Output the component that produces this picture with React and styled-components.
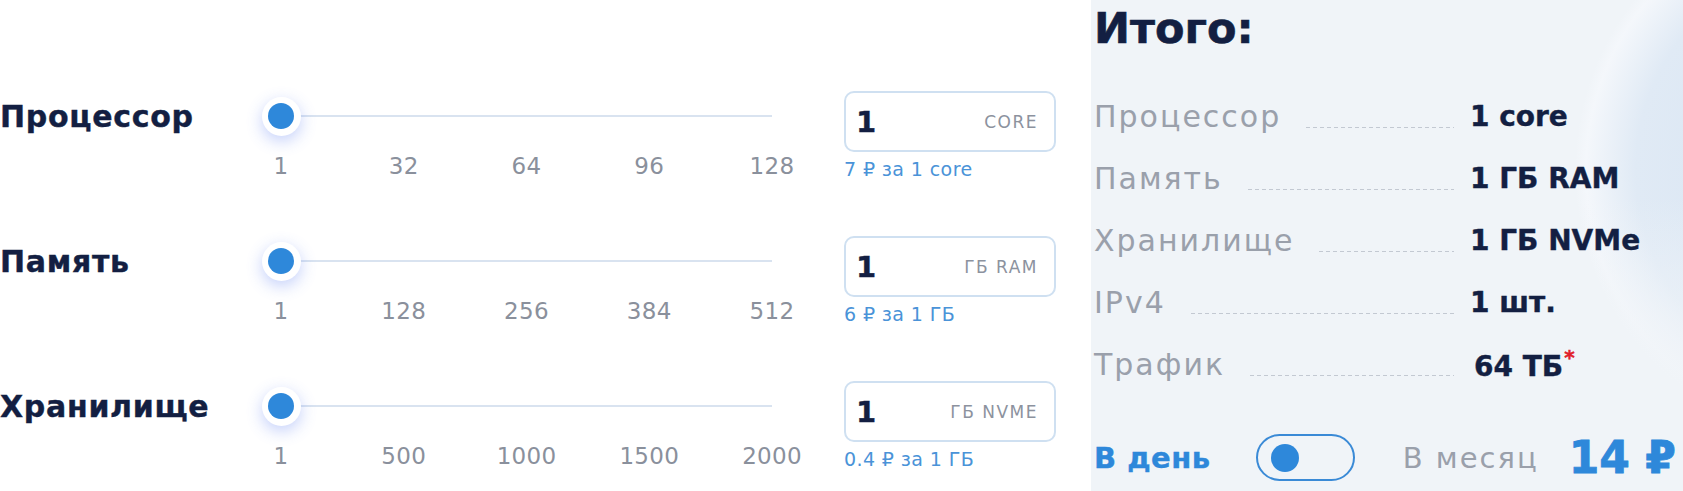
import React from 'react'
import styled, { createGlobalStyle } from 'styled-components'

const GlobalStyle = createGlobalStyle`
  html, body {
    margin: 0;
    padding: 0;
    background: #fff;
  }
  body {
    font-family: "DejaVu Sans", Inter, Arial, sans-serif;
    color: #131f42;
  }
`

const sliders = [
  { label: 'Процессор', ticks: ['1', '32', '64', '96', '128'], unit: 'CORE', price: '7 ₽ за 1 core' },
  { label: 'Память', ticks: ['1', '128', '256', '384', '512'], unit: 'ГБ RAM', price: '6 ₽ за 1 ГБ' },
  { label: 'Хранилище', ticks: ['1', '500', '1000', '1500', '2000'], unit: 'ГБ NVME', price: '0.4 ₽ за 1 ГБ' },
]

const summary = [
  { label: 'Процессор', value: '1 core' },
  { label: 'Память', value: '1 ГБ RAM' },
  { label: 'Хранилище', value: '1 ГБ NVMe' },
  { label: 'IPv4', value: '1 шт.' },
  { label: 'Трафик', value: '64 ТБ', note: true },
]

const App = () => {
  return (
    <>
      <GlobalStyle />
      <Page>
        <Config>
          {sliders.map((s) => (
            <SliderRow key={s.label}>
              <RowLabel>{s.label}</RowLabel>
              <Track>
                <Line />
                <Thumb />
              </Track>
              <ValueBox>
                <Amount>1</Amount>
                <Unit>{s.unit}</Unit>
              </ValueBox>
              <span />
              <Ticks>
                {s.ticks.map((t) => (
                  <Tick key={t}>{t}</Tick>
                ))}
              </Ticks>
              <Price>{s.price}</Price>
            </SliderRow>
          ))}
        </Config>

        <Total>
          <Title>Итого:</Title>
          <SummaryList>
            {summary.map((r) => (
              <SummaryRow key={r.label}>
                <SummaryLabel>
                  <span>{r.label}</span>
                  <Leader />
                </SummaryLabel>
                <SummaryValue $note={r.note}>
                  {r.value}
                  {r.note && <Star>*</Star>}
                </SummaryValue>
              </SummaryRow>
            ))}
          </SummaryList>
          <Period>
            <PeriodOption $active>В день</PeriodOption>
            <Toggle>
              <Knob />
            </Toggle>
            <PeriodOption>В месяц</PeriodOption>
            <Sum>14 ₽</Sum>
          </Period>
        </Total>
      </Page>
    </>
  )
}

const Page = styled.div`
  display: flex;
  width: 1683px;
  height: 491px;
  overflow: hidden;
`

const Config = styled.div`
  width: 1091px;
  flex-shrink: 0;
  padding-top: 91px;
  display: flex;
  flex-direction: column;
  gap: 52px;
  box-sizing: border-box;
`

const SliderRow = styled.div`
  display: grid;
  grid-template-columns: 281px 563px 212px;
  grid-template-rows: 61px 32px;
  align-items: center;
`

const RowLabel = styled.div`
  font-size: 30px;
  font-weight: 700;
  color: #131f42;
  letter-spacing: 0.7px;
  padding-bottom: 11px;
  -webkit-text-stroke: 0.4px #131f42;
`

const Track = styled.div`
  position: relative;
  width: 491px;
  height: 39px;
  margin-bottom: 11px;
  display: flex;
  align-items: center;
`

const Line = styled.div`
  width: 100%;
  height: 2px;
  background: #d9e3f0;
`

const Thumb = styled.div`
  position: absolute;
  left: -19.5px;
  top: 0;
  width: 39px;
  height: 39px;
  border-radius: 50%;
  background: #fff;
  box-shadow: 0 5px 16px rgba(70, 110, 240, 0.32);
  display: flex;
  align-items: center;
  justify-content: center;
  &::after {
    content: '';
    width: 26px;
    height: 26px;
    border-radius: 50%;
    background: #2e88da;
  }
`

const ValueBox = styled.div`
  height: 61px;
  box-sizing: border-box;
  border: 2px solid #cfe0f1;
  border-radius: 10px;
  display: flex;
  align-items: center;
  justify-content: space-between;
  padding: 0 16px 0 10px;
`

const Amount = styled.span`
  font-size: 29px;
  font-weight: 700;
  color: #131f42;
  -webkit-text-stroke: 0.4px #131f42;
`

const Unit = styled.span`
  font-size: 17px;
  color: #8c929e;
  letter-spacing: 1.5px;
`

const Ticks = styled.div`
  width: 491px;
  display: flex;
  justify-content: space-between;
  align-self: start;
  padding-top: 1px;
`

const Tick = styled.span`
  width: 0;
  display: flex;
  justify-content: center;
  white-space: nowrap;
  font-size: 23px;
  color: #8a909c;
  letter-spacing: 0.3px;
`

const Price = styled.div`
  align-self: start;
  padding-top: 6px;
  font-size: 19px;
  color: #4a93d8;
  letter-spacing: 0.4px;
  white-space: nowrap;
`

const Total = styled.div`
  flex: 1;
  padding-left: 3px;
  background:
    linear-gradient(to bottom, rgba(240, 244, 248, 0) 40%, #f0f4f8 82%),
    radial-gradient(circle 275px at 759px 170px, #d5e3f2 0%, #e0eaf5 78%, #f4f7fb 96%, rgba(240, 244, 248, 0) 100%),
    #f0f4f8;
  display: flex;
  flex-direction: column;
`

const Title = styled.div`
  font-size: 43px;
  font-weight: 700;
  line-height: 50px;
  margin-top: 3px;
  color: #131f42;
  -webkit-text-stroke: 0.6px #131f42;
`

const SummaryList = styled.div`
  margin-top: 32px;
  display: flex;
  flex-direction: column;
`

const SummaryRow = styled.div`
  height: 62px;
  display: grid;
  grid-template-columns: 360px auto;
  column-gap: 16px;
  align-items: center;
`

const SummaryLabel = styled.div`
  display: flex;
  align-items: center;
  font-size: 30px;
  color: #9aa0ab;
  letter-spacing: 2px;
`

const Leader = styled.div`
  flex: 1;
  height: 1px;
  margin: 22px 0 0 25px;
  background: repeating-linear-gradient(90deg, #c3c9d2 0 4px, transparent 4px 7px);
`

const SummaryValue = styled.div`
  font-size: 28px;
  font-weight: 700;
  color: #131f42;
  margin-left: ${(p) => (p.$note ? '4px' : '0')};
  white-space: nowrap;
  -webkit-text-stroke: 0.4px #131f42;
`

const Star = styled.sup`
  font-size: 20px;
  color: #e0202a;
  vertical-align: 12px;
  margin-left: 1px;
  -webkit-text-stroke: 0.5px #e0202a;
`

const Period = styled.div`
  margin-top: 37px;
  display: flex;
  align-items: center;
`

const PeriodOption = styled.span`
  font-size: 29px;
  font-weight: ${(p) => (p.$active ? 700 : 400)};
  color: ${(p) => (p.$active ? '#2e88da' : '#9aa0ab')};
  margin-right: ${(p) => (p.$active ? '45px' : '30px')};
  letter-spacing: ${(p) => (p.$active ? '0.5px' : '2px')};
  -webkit-text-stroke: ${(p) => (p.$active ? '0.4px #2e88da' : '0')};
`

const Toggle = styled.div`
  width: 99px;
  height: 47px;
  box-sizing: border-box;
  border: 2px solid #3a8ad6;
  border-radius: 24px;
  display: flex;
  align-items: center;
  padding-left: 13px;
  margin-right: 48px;
`

const Knob = styled.div`
  width: 28px;
  height: 28px;
  border-radius: 50%;
  background: #2e88da;
`

const Sum = styled.span`
  font-size: 44px;
  font-weight: 700;
  color: #2e88da;
  -webkit-text-stroke: 0.8px #2e88da;
`

export default App
